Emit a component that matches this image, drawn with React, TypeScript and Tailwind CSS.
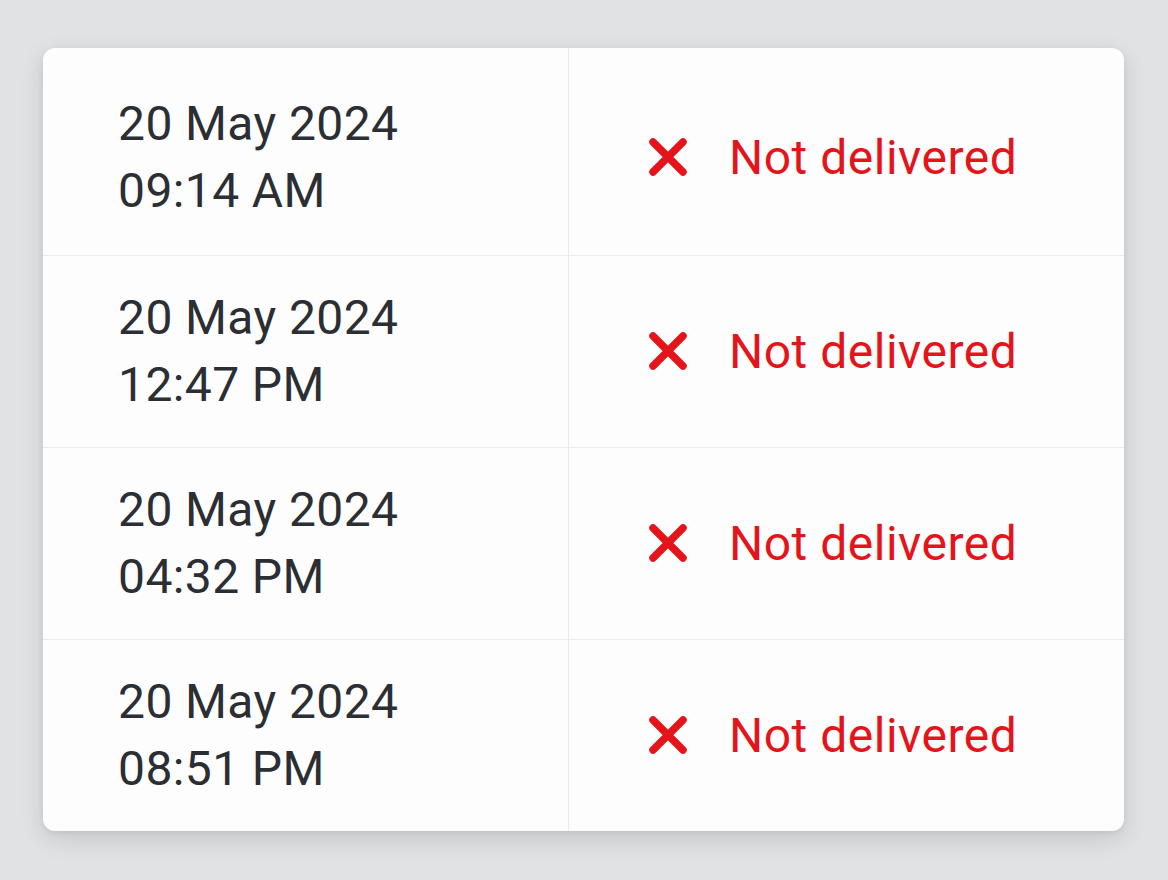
const ROWS = [
  { date: "20 May 2024", time: "09:14 AM" },
  { date: "20 May 2024", time: "12:47 PM" },
  { date: "20 May 2024", time: "04:32 PM" },
  { date: "20 May 2024", time: "08:51 PM" },
];

function CrossIcon() {
  return (
    <svg width="38" height="38" viewBox="0 0 38 38" className="shrink-0">
      <path
        d="M4 4 L34 34 M34 4 L4 34"
        stroke="#e5141b"
        strokeWidth="7.5"
        strokeLinecap="round"
        fill="none"
      />
    </svg>
  );
}

export default function App() {
  return (
    <div
      className="w-[1168px] h-[880px] bg-[#e1e2e4] pt-[48px] pl-[43px]"
      style={{ fontFamily: "Roboto, 'Liberation Sans', sans-serif" }}
    >
      <div className="w-[1081px] rounded-[12px] bg-[#fdfdfd] overflow-hidden shadow-[0_8px_24px_rgba(0,0,0,0.12),0_2px_6px_rgba(0,0,0,0.06)]">
        {ROWS.map((row, i) => (
          <div
            key={row.time}
            className={`grid grid-cols-[526px_1fr] ${i > 0 ? "border-t border-[#ebebeb]" : ""}`}
          >
            {/* Date + time */}
            <div
              className={`border-r border-[#ebebeb] pl-[75px] text-[48px] leading-[67px] tracking-[0.4px] text-[#2b2e33] ${
                i === 0 ? "pt-[42px] pb-[31px]" : "pt-[28px] pb-[29px]"
              }`}
            >
              <div>{row.date}</div>
              <div>{row.time}</div>
            </div>

            {/* Status */}
            <div
              className={`flex items-center pl-[80px] ${
                i === 0 ? "pt-[42px] pb-[31px]" : "pt-[28px] pb-[29px]"
              }`}
            >
              <CrossIcon />
              <span className="ml-[42px] text-[48px] leading-[67px] tracking-[0.5px] text-[#e5141b]">
                Not delivered
              </span>
            </div>
          </div>
        ))}
      </div>
    </div>
  );
}
